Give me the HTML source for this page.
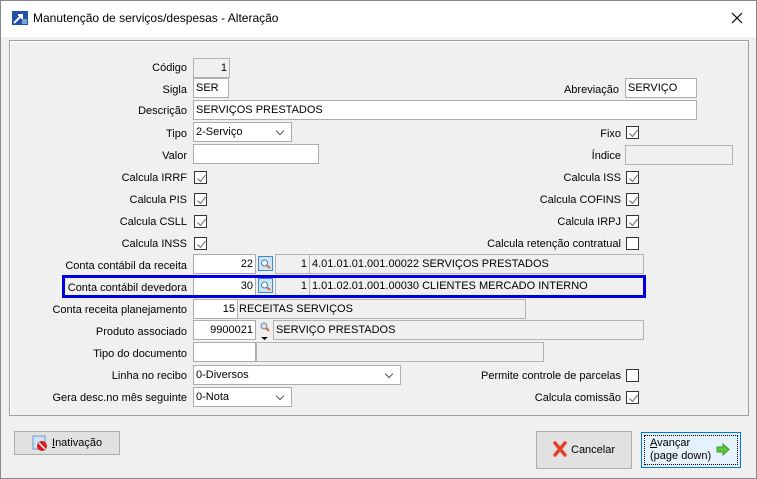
<!DOCTYPE html>
<html><head><meta charset="utf-8"><style>
*{box-sizing:border-box;margin:0;padding:0}
body{width:757px;height:479px;overflow:hidden;background:#f0f0f0;font-family:"Liberation Sans",sans-serif;font-size:11px;color:#000;position:relative}
.a{position:absolute}
.lbl{position:absolute;text-align:right;white-space:nowrap;line-height:13px;margin-top:1px}
.f{position:absolute;background:#fff;border:1px solid #acacac;height:20px;line-height:19px;padding:0 2px;white-space:nowrap;overflow:hidden}
.g{background:#f0f0f0;border-color:#b4b4b4}
.r{text-align:right}
.cb{position:absolute;width:13px;height:13px;border:1px solid #333;background:#fff}
.cb svg{position:absolute;left:1px;top:1px}
.sel:after{content:"";position:absolute;right:8px;top:5px;width:5px;height:5px;border-right:1px solid #555;border-bottom:1px solid #555;transform:rotate(45deg)}
.btn{position:absolute;border:1px solid #adadad;background:#e1e1e1}
</style></head><body>
<div class="a" style="left:0;top:0;width:757px;height:479px;border:1px solid #888"></div>
<div class="a" style="left:1px;top:1px;width:755px;height:36px;background:#fff"></div>
<svg class="a" style="left:12px;top:11px" width="16" height="14"><rect width="16" height="14" fill="#2050a8"/><path d="M2 12 L9 5 M6 4 H10 V8" stroke="#fff" stroke-width="2" fill="none"/><rect x="10" y="8" width="5" height="5" fill="#7aa0d8"/></svg>
<div class="a" style="left:33px;top:11px;font-size:12px">Manutenção de serviços/despesas - Alteração</div>
<svg class="a" style="left:731px;top:12px" width="12" height="12"><path d="M1 1 L11 11 M11 1 L1 11" stroke="#000" stroke-width="1.2"/></svg>
<div class="a" style="left:9px;top:40px;width:740px;height:376px;border:1px solid #a0a0a0;box-shadow:inset 1px 1px 0 #fff"></div>

<div class="lbl" style="right:570px;top:61px">Código</div>
<div class="f g r" style="left:193px;top:58px;width:37px">1</div>
<div class="lbl" style="right:570px;top:83px">Sigla</div>
<div class="f" style="left:193px;top:78px;width:36px">SER</div>
<div class="lbl" style="right:138px;top:83px">Abreviação</div>
<div class="f" style="left:625px;top:78px;width:72px">SERVIÇO</div>
<div class="lbl" style="right:570px;top:104px">Descrição</div>
<div class="f" style="left:193px;top:100px;width:504px">SERVIÇOS PRESTADOS</div>
<div class="lbl" style="right:570px;top:127px">Tipo</div>
<div class="f sel" style="left:193px;top:122px;width:99px">2-Serviço</div>
<div class="lbl" style="right:136px;top:127px">Fixo</div>
<div class="lbl" style="right:570px;top:149px">Valor</div>
<div class="f" style="left:193px;top:144px;width:126px"></div>
<div class="lbl" style="right:136px;top:149px">Índice</div>
<div class="f g" style="left:625px;top:145px;width:108px"></div>

<div class="lbl" style="right:570px;top:171px">Calcula IRRF</div>
<div class="lbl" style="right:570px;top:193px">Calcula PIS</div>
<div class="lbl" style="right:570px;top:215px">Calcula CSLL</div>
<div class="lbl" style="right:570px;top:237px">Calcula INSS</div>
<div class="lbl" style="right:136px;top:171px">Calcula ISS</div>
<div class="lbl" style="right:136px;top:193px">Calcula COFINS</div>
<div class="lbl" style="right:136px;top:215px">Calcula IRPJ</div>
<div class="lbl" style="right:136px;top:237px">Calcula retenção contratual</div>

<div class="cb" style="left:626px;top:126px"><svg width="11" height="11"><path d="M1.5 5.5 L4.5 8.5 L9.5 2" stroke="#666" fill="none"/></svg></div>
<div class="cb" style="left:194px;top:171px"><svg width="11" height="11"><path d="M1.5 5.5 L4.5 8.5 L9.5 2" stroke="#666" fill="none"/></svg></div>
<div class="cb" style="left:194px;top:193px"><svg width="11" height="11"><path d="M1.5 5.5 L4.5 8.5 L9.5 2" stroke="#666" fill="none"/></svg></div>
<div class="cb" style="left:194px;top:215px"><svg width="11" height="11"><path d="M1.5 5.5 L4.5 8.5 L9.5 2" stroke="#666" fill="none"/></svg></div>
<div class="cb" style="left:194px;top:237px"><svg width="11" height="11"><path d="M1.5 5.5 L4.5 8.5 L9.5 2" stroke="#666" fill="none"/></svg></div>
<div class="cb" style="left:626px;top:171px"><svg width="11" height="11"><path d="M1.5 5.5 L4.5 8.5 L9.5 2" stroke="#666" fill="none"/></svg></div>
<div class="cb" style="left:626px;top:193px"><svg width="11" height="11"><path d="M1.5 5.5 L4.5 8.5 L9.5 2" stroke="#666" fill="none"/></svg></div>
<div class="cb" style="left:626px;top:215px"><svg width="11" height="11"><path d="M1.5 5.5 L4.5 8.5 L9.5 2" stroke="#666" fill="none"/></svg></div>
<div class="cb" style="left:626px;top:237px"></div>

<div class="lbl" style="right:570px;top:259px">Conta contábil da receita</div>
<div class="f r" style="left:193px;top:254px;width:63px">22</div>
<svg class="a" style="left:258px;top:256px" width="15" height="15"><rect x=".5" y=".5" width="14" height="14" fill="#cfe3f7" stroke="#3a8ad8"/><circle cx="6.5" cy="7" r="3" fill="#fff" stroke="#4a7fb0"/><path d="M9 9.5 L12 12" stroke="#d07020" stroke-width="2"/></svg>
<div class="f g r" style="left:275px;top:254px;width:35px">1</div>
<div class="f g" style="left:309px;top:254px;width:335px">4.01.01.01.001.00022 SERVIÇOS PRESTADOS</div>

<div class="lbl" style="right:570px;top:281px">Conta contábil devedora</div>
<div class="f r" style="left:193px;top:276px;width:63px">30</div>
<svg class="a" style="left:258px;top:278px" width="15" height="15"><rect x=".5" y=".5" width="14" height="14" fill="#cfe3f7" stroke="#3a8ad8"/><circle cx="6.5" cy="7" r="3" fill="#fff" stroke="#4a7fb0"/><path d="M9 9.5 L12 12" stroke="#d07020" stroke-width="2"/></svg>
<div class="f g r" style="left:275px;top:276px;width:35px">1</div>
<div class="f g" style="left:309px;top:276px;width:335px">1.01.02.01.001.00030 CLIENTES MERCADO INTERNO</div>
<div class="a" style="left:62px;top:275px;width:584px;height:23px;border:3px solid #0000e6"></div>

<div class="lbl" style="right:570px;top:303px">Conta receita planejamento</div>
<div class="f r" style="left:193px;top:299px;width:45px">15</div>
<div class="f g" style="left:237px;top:299px;width:289px;padding-left:1px">RECEITAS SERVIÇOS</div>

<div class="lbl" style="right:570px;top:325px">Produto associado</div>
<div class="f r" style="left:193px;top:320px;width:63px">9900021</div>
<svg class="a" style="left:259px;top:321px" width="12" height="20"><circle cx="5" cy="5" r="3" fill="#dde" stroke="#6a8ab0"/><path d="M7 7 L10 10" stroke="#d07020" stroke-width="2"/><path d="M2 16 H9 L5.5 19Z" fill="#000"/></svg>
<div class="f g" style="left:273px;top:320px;width:371px">SERVIÇO PRESTADOS</div>

<div class="lbl" style="right:570px;top:347px">Tipo do documento</div>
<div class="f" style="left:193px;top:342px;width:63px"></div>
<div class="f g" style="left:256px;top:342px;width:288px"></div>

<div class="lbl" style="right:570px;top:369px">Linha no recibo</div>
<div class="f sel" style="left:193px;top:365px;width:208px">0-Diversos</div>
<div class="lbl" style="right:136px;top:369px">Permite controle de parcelas</div>
<div class="cb" style="left:626px;top:369px"></div>

<div class="lbl" style="right:570px;top:391px">Gera desc.no mês seguinte</div>
<div class="f sel" style="left:193px;top:387px;width:99px">0-Nota</div>
<div class="lbl" style="right:136px;top:391px">Calcula comissão</div>
<div class="cb" style="left:626px;top:391px"><svg width="11" height="11"><path d="M1.5 5.5 L4.5 8.5 L9.5 2" stroke="#666" fill="none"/></svg></div>

<div class="btn" style="left:14px;top:431px;width:106px;height:24px"></div>
<svg class="a" style="left:32px;top:435px" width="16" height="17"><rect x="1" y="1" width="12" height="13" fill="#cfe0f4" stroke="#6a9ad0"/><circle cx="10" cy="11" r="5" fill="#d02020"/><path d="M7 8 L13 14" stroke="#fff" stroke-width="1.5"/></svg>
<div class="a" style="left:52px;top:437px"><u>I</u>nativação</div>

<div class="btn" style="left:536px;top:431px;width:96px;height:38px"></div>
<svg class="a" style="left:553px;top:441px" width="14" height="16"><path d="M2 2 L12 14 M12 2 L2 14" stroke="#e04030" stroke-width="3.5" stroke-linecap="round"/></svg>
<div class="a" style="left:571px;top:444px">Cancelar</div>

<div class="btn" style="left:641px;top:432px;width:100px;height:36px;background:#e5f1fb;border-color:#0078d7"></div>
<div class="a" style="left:644px;top:435px;width:94px;height:30px;border:1px dotted #000"></div>
<div class="a" style="left:650px;top:437px;line-height:13px"><u>A</u>vançar<br>(page down)</div>
<svg class="a" style="left:716px;top:443px" width="14" height="13"><path d="M1 4 H7 V1 L13 6.5 L7 12 V9 H1Z" fill="#5cc83c" stroke="#3a9a2a"/></svg>
</body></html>
